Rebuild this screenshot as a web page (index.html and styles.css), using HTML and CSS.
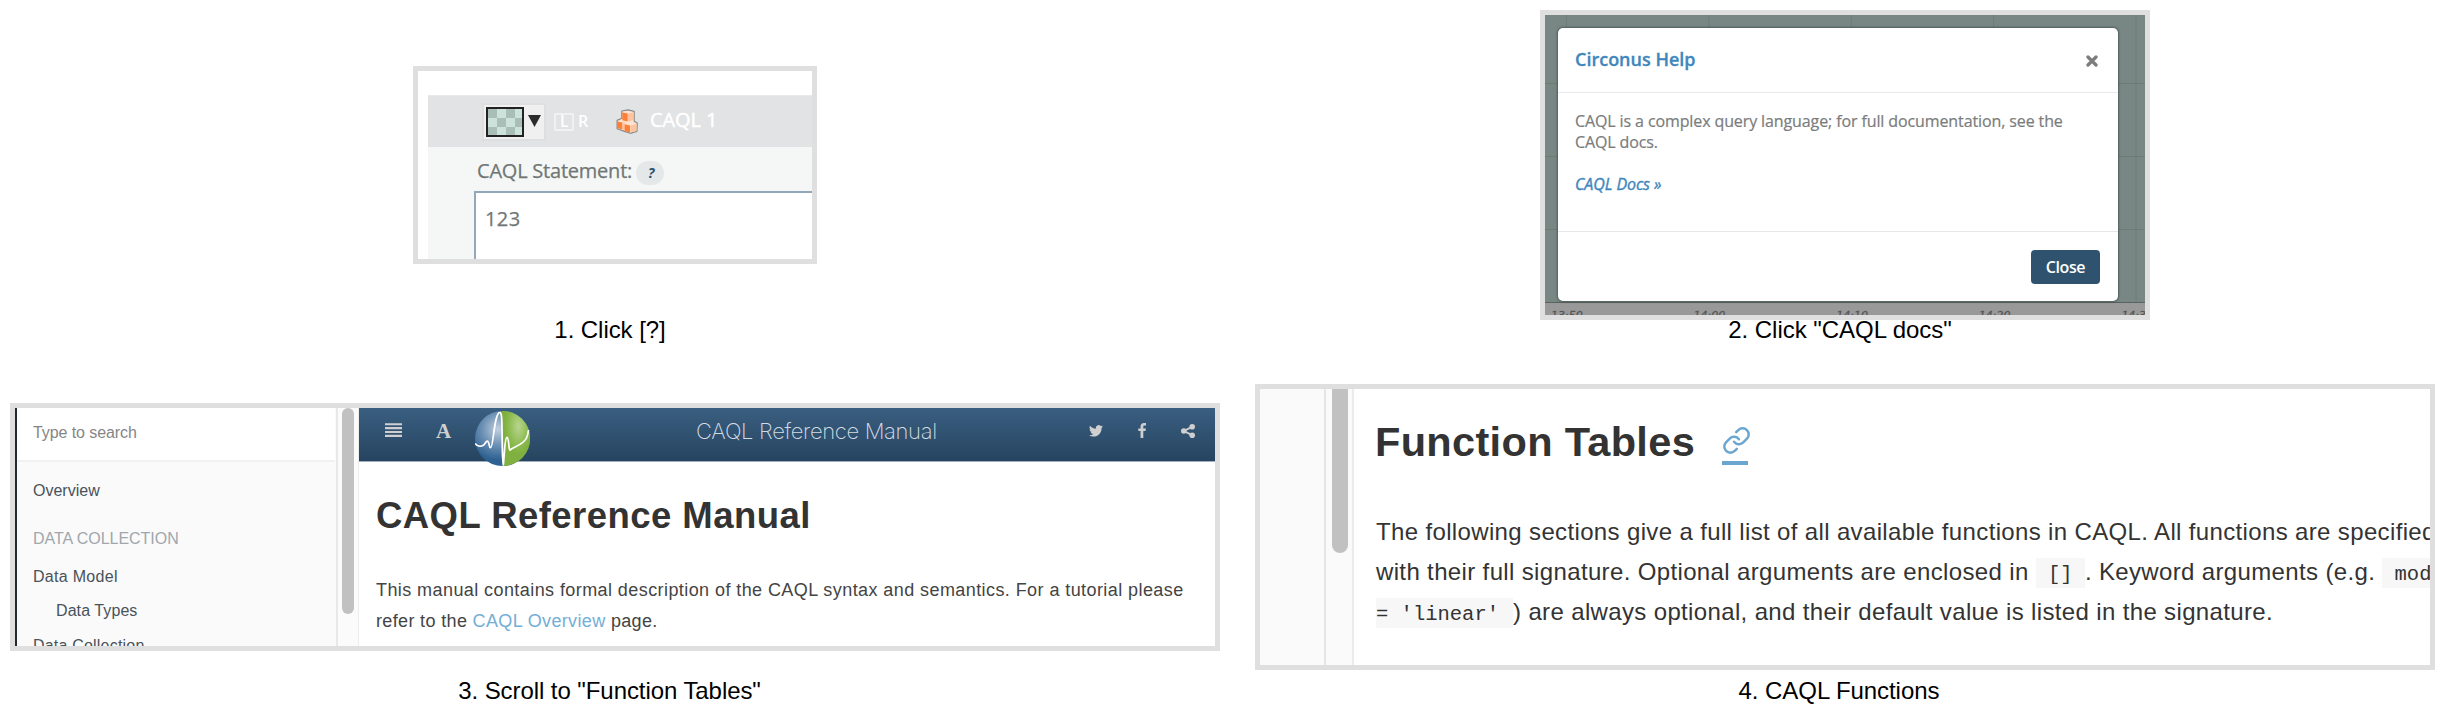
FILE: index.html
```html
<!DOCTYPE html>
<html lang="en">
<head>
<meta charset="utf-8">
<title>CAQL Functions</title>
<link rel="stylesheet" href="styles.css">
</head>
<body>
<main class="steps">
  <figure class="step step-1">
    <div class="frame statement">
      <div class="bar">
        <div class="picker"><span class="swatch"></span><svg class="caret" width="13" height="12" viewBox="0 0 13 12"><path d="M0 0h13L6.5 12z" fill="#2c2c2c"/></svg></div>
        <span class="axis-l">L</span><span class="axis-r">R</span>
        <svg class="cubes" width="22" height="25" viewBox="0 0 22 25">
          <path d="M5.800 2L12 .8l6.200 1.600v9.800l3.100 1.800-.4 8.400-6.600 1.900-5.900-1.900-7.300-2.600v-8.400l4.700-2.200z" fill="#ffe1cf" stroke="#8b8b8b" stroke-width="1.200" stroke-linejoin="round"/>
          <path d="M6.300 3.600l5.400 1v7.800l-5.400-1.200z" fill="#ff7f38"/><path d="M12.200 4.600l5.400-1.200v7.400l-5.400 1.600z" fill="#ffc39d"/>
          <path d="M1 12.400l5.400 1.200v6.800L1 19.100z" fill="#ff7f38"/><path d="M6.600 13.600l2-.6v8l-2-.6z" fill="#ffc39d"/>
          <path d="M8.600 15.300l5.400 1.200v7l-5.400-1.400z" fill="#ff7f38"/><path d="M14.500 16.500l6-1.600v7l-6 1.700z" fill="#ffc39d"/>
        </svg>
        <span class="bar-title">CAQL 1</span>
      </div>
      <div class="statement-body">
        <div class="field-label"><span>CAQL Statement:</span><span class="help">?</span></div>
        <div class="textarea">123</div>
      </div>
    </div>
    <figcaption>1. Click [?]</figcaption>
  </figure>

  <figure class="step step-2">
    <div class="frame chart">
      <div class="modal">
        <div class="modal-head"><span class="modal-title">Circonus Help</span>
          <svg width="12" height="12" viewBox="0 0 12 12"><path d="M2 2l8 8M10 2l-8 8" stroke="#7d7d7d" stroke-width="3.300" stroke-linecap="round"/></svg>
        </div>
        <div class="modal-body">
          <p>CAQL is a complex query language; for full documentation, see the<br>CAQL docs.</p>
          <a class="docs">CAQL Docs »</a>
        </div>
        <div class="modal-foot"><span class="close">Close</span></div>
      </div>
      <div class="time-axis"><span>13:50</span><span>14:00</span><span>14:10</span><span>14:20</span><span>14:30</span></div>
    </div>
    <figcaption>2. Click "CAQL docs"</figcaption>
  </figure>

  <figure class="step step-3">
    <div class="frame manual">
      <nav class="side">
        <div class="search">Type to search</div>
        <ul class="toc">
          <li>Overview</li>
          <li class="toc-head">DATA COLLECTION</li>
          <li class="toc-model">Data Model</li>
          <li class="toc-types">Data Types</li>
          <li class="toc-coll">Data Collection</li>
        </ul>
      </nav>
      <div class="gutter"><div class="thumb"></div></div>
      <div class="page">
        <div class="topbar">
          <svg class="ic-list" width="17" height="14" viewBox="0 0 17 14"><path d="M0 1.200h17M0 5.100h17M0 9h17M0 12.900h17" stroke="#cfcfcf" stroke-width="2.100"/></svg>
          <span class="ic-font">A</span>
          <svg class="logo" width="55" height="55" viewBox="0 0 55 55">
            <defs>
              <radialGradient id="lb" cx=".42" cy=".33" r=".56"><stop offset="0" stop-color="#c3d0de"/><stop offset=".5" stop-color="#6f93b6"/><stop offset="1" stop-color="#2d6192"/></radialGradient>
              <radialGradient id="lg" cx=".58" cy=".28" r=".5"><stop offset="0" stop-color="#b9d58f"/><stop offset=".75" stop-color="#88b94a"/><stop offset="1" stop-color="#80b03f"/></radialGradient>
            </defs>
            <circle cx="27.500" cy="27.500" r="27.500" fill="url(#lb)"/>
            <path d="M27 0a27.500 27.500 0 0 1 1.500 55C27 40 27 14 27 0z" fill="url(#lg)"/>
            <path d="M0 32.500c2 2.600 5.500 3.200 8 2s2.800-5.400 5-4c1.400 1.600 1 6 2.500 6.200C18.500 37 19 1.500 25 1.300 28.500 1 26 40 28.300 54 29.500 45 29.500 27 32 26.300c2 .6 1.500 10.500 2.800 12.900C39 36 49 33 51.500 27c1-2.500 1.800-5 2-8" fill="none" stroke="#fff" stroke-width="1.700" stroke-linejoin="round"/>
          </svg>
          <span class="topbar-title">CAQL Reference Manual</span>
          <svg class="ic-tw" width="14" height="12" viewBox="0 2 24 20.500"><path fill="#cfcfcf" d="M23.953 4.570a10 10 0 01-2.825.775 4.958 4.958 0 002.163-2.723c-.951.555-2.005.959-3.127 1.184a4.920 4.920 0 00-8.384 4.482C7.690 8.095 4.067 6.130 1.640 3.162a4.822 4.822 0 00-.666 2.475c0 1.710.870 3.213 2.188 4.096a4.904 4.904 0 01-2.228-.616v.060a4.923 4.923 0 003.946 4.827 4.996 4.996 0 01-2.212.085 4.936 4.936 0 004.604 3.417 9.867 9.867 0 01-6.102 2.105c-.390 0-.779-.023-1.170-.067a13.995 13.995 0 007.557 2.209c9.053 0 13.998-7.496 13.998-13.985 0-.210 0-.420-.015-.630A9.935 9.935 0 0024 4.590z"/></svg>
          <svg class="ic-fb" width="8" height="15" viewBox="0 0 8 15"><path fill="#cfcfcf" d="M8 .1v2.400H6.600c-1.100 0-1.300.5-1.300 1.300v1.700h2.600l-.35 2.600H5.300V15H2.550V8.100H.3V5.500h2.250V3.600C2.550 1.300 3.900.1 5.900.1z"/></svg>
          <svg class="ic-share" width="14" height="14" viewBox="0 0 14 14"><g fill="#cfcfcf"><circle cx="2.800" cy="7" r="2.800"/><circle cx="11.200" cy="2.800" r="2.800"/><circle cx="11.200" cy="11.200" r="2.800"/></g><path d="M11.200 2.800L2.800 7l8.400 4.200" fill="none" stroke="#cfcfcf" stroke-width="1.900"/></svg>
        </div>
        <h1>CAQL Reference Manual</h1>
        <p>This manual contains formal description of the CAQL syntax and semantics. For a tutorial please<br><span class="line-2">refer to the <a>CAQL Overview</a> page.</span></p>
      </div>
    </div>
    <figcaption>3. Scroll to "Function Tables"</figcaption>
  </figure>

  <figure class="step step-4">
    <div class="frame functions">
      <div class="fn-side"></div>
      <div class="fn-gutter"><div class="fn-thumb"></div></div>
      <div class="fn-page">
        <h2><span>Function Tables</span>
          <a class="anchor"><svg width="27" height="27" viewBox="1 1 22 22" fill="none" stroke="#6aa6d0" stroke-width="2" stroke-linecap="round"><path d="M10 13a5 5 0 0 0 7.540.540l3-3a5 5 0 0 0-7.070-7.070l-1.720 1.710" transform="translate(24 24) rotate(180)"/><path d="M10 13a5 5 0 0 0 7.540.540l3-3a5 5 0 0 0-7.070-7.070l-1.720 1.710"/></svg></a>
        </h2>
        <p>The following sections give a full list of all available functions in CAQL. All functions are specified<br>with their full signature. Optional arguments are enclosed in <code>[]</code>. Keyword arguments (e.g. <code>mode</code><br><code class="cont">= 'linear'</code>) are always optional, and their default value is listed in the signature.</p>
      </div>
    </div>
    <figcaption>4. CAQL Functions</figcaption>
  </figure>
</main>
</body>
</html>
```
FILE: styles.css
```css
* { box-sizing: border-box; }
body { margin: 0; background: #fff; font-family: "Liberation Sans", Arial, sans-serif; color: #000; }
svg { display: block; flex: none; }
h1, h2, p, ul { margin: 0; padding: 0; list-style: none; }

.steps { display: grid; grid-template-columns: 1230px 1230px; grid-template-rows: 345px 379px; height: 724px; overflow: hidden; }
.step { margin: 0; display: flex; flex-direction: column; align-items: center; }
.frame { flex: none; border: 5px solid #dfdfdf; overflow: hidden; white-space: nowrap; background: #fff; }
figcaption { font-size: 24px; line-height: 28px; letter-spacing: -0.06px; padding-right: 10px; z-index: 1; }

/* step 1: statement editor */
.step-1 .frame { width: 404px; height: 198px; margin-top: 66px; }
.step-1 figcaption { margin-top: 52px; }
.statement { padding: 24px 0 0 10px; font-family: "Open Sans", sans-serif; }
.bar { display: flex; align-items: flex-start; height: 52px; background: #e2e3e5; border-top: 1px solid #e9e9ea; padding: 7px 0 0 54px; color: #fff; }
.picker { flex: none; display: flex; width: 64px; height: 38px; padding: 2px; background: #f0f0f0; border: 2px solid #dfdfdf; }
.swatch { flex: none; width: 38px; height: 30px; border: 2px solid #222; background: conic-gradient(#cbe3db 25%, #a9beb6 0 50%, #cbe3db 0 75%, #a9beb6 0) 0 0 / 18px 18px; }
.caret { margin: 8px 0 0 4px; }
.axis-l { width: 20px; height: 18px; margin: 10px 0 0 8px; border: 2px solid #f0f1f2; font-size: 15.500px; font-weight: 600; line-height: 12px; padding-left: 4px; }
.axis-r { margin: 10px 0 0 4px; width: 15px; font-size: 16px; font-weight: 600; line-height: 16px; }
.cubes { margin: 6px 0 0 23px; }
.bar-title { margin: 4px 0 0 12px; font-size: 20px; line-height: 26px; letter-spacing: -0.09px; -webkit-text-stroke: 0.5px #fff; }
.statement-body { height: 112px; padding: 10px 0 0 46px; background: #f4f7f6; color: #707675; -webkit-text-stroke: 0.25px #707675; }
.field-label { display: flex; padding-left: 3px; height: 34px; font-size: 20px; line-height: 28px; letter-spacing: -0.22px; }
.help { width: 28px; height: 24px; margin: 4px 0 0 4px; border-radius: 12px; background: #e5e8e8; color: #2f526e; font-size: 14px; font-weight: 700; font-style: italic; line-height: 24px; padding-left: 2px; text-align: center; -webkit-text-stroke: 0; }
.textarea { height: 90px; border: 2px solid #92a8b8; border-right: 0; background: #fff; font-size: 20px; line-height: 28px; letter-spacing: 0.4px; padding: 12px 0 0 9px; }

/* step 2: help dialog over the chart */
.step-2 .frame { width: 610px; height: 310px; margin-top: 10px; }
.step-2 figcaption { margin-top: -4px; padding-right: 10px; letter-spacing: -0.03px; }
.chart { padding: 13px 0 0 13px; font-family: "Open Sans", sans-serif; background-color: #788783;
  background-image: linear-gradient(#6e7c78, #6e7c78), linear-gradient(#6e7c78, #6e7c78), linear-gradient(#6e7c78, #6e7c78), linear-gradient(90deg, #6e7c78 1px, transparent 1px);
  background-size: 100% 1px, 100% 1px, 100% 1px, 142.400px 100%; background-position: 0 68px, 0 141px, 0 214px, 21px 0; background-repeat: no-repeat, no-repeat, no-repeat, repeat-x; }
.modal { position: relative; width: 560px; height: 273px; border-radius: 5px; background: #fff; box-shadow: 0 0 2px 1px rgba(50, 62, 58, 0.55); }
.modal-head { display: flex; justify-content: space-between; height: 65px; padding: 19px 20px 0 17px; border-bottom: 1.500px solid #e6eaed; }
.modal-title { font-size: 18px; font-weight: 600; line-height: 24px; color: #3e87bd; -webkit-text-stroke: 0.3px #3e87bd; }
.modal-head svg { margin-top: 8px; }
.modal-body { height: 139px; padding: 18px 0 0 17px; border-bottom: 1px solid #e4e8eb; font-size: 16px; line-height: 21px; letter-spacing: -0.11px; color: #7a7c7c; -webkit-text-stroke: 0.2px #7a7c7c; }
.docs { display: block; margin-top: 21px; font-style: italic; letter-spacing: -0.07px; color: #3e87bd; -webkit-text-stroke: 0.4px #3e87bd; }
.modal-foot { display: flex; justify-content: flex-end; padding: 18px 18px 0 0; }
.close { width: 69px; height: 34px; border-radius: 4px; background: #2f536f; color: #fff; font-size: 16px; font-weight: 600; line-height: 34px; letter-spacing: -0.41px; text-align: center; }
.time-axis { display: flex; height: 13px; margin: 1px 0 0 -13px; padding: 7px 0 0 6px; background: #999; border-top: 1px solid #59625f; font: italic 11px/12px "DejaVu Sans", sans-serif; color: #555; }
.time-axis span { flex: none; width: 142.600px; -webkit-text-stroke: 0.300px #555; }

/* step 3: reference manual */
.step-3 .frame { width: 1210px; height: 248px; margin-top: 58px; }
.step-3 figcaption { margin-top: 26px; padding-right: 11px; letter-spacing: -0.07px; }
.manual { display: flex; }
.side { flex: none; width: 323px; border-left: 2px solid #23292d; border-right: 2px solid #e8e8e8; background: #fafafa; font-size: 16px; line-height: 20px; color: #48525a; }
.search { height: 54px; width: 318px; padding: 15px 0 0 16px; background: #fff; border-bottom: 2px solid #f1f1f1; color: #868686; letter-spacing: -0.08px; }
.toc { padding: 19px 0 0 16px; }
.toc-head { margin-top: 28px; color: #9fa7ad; letter-spacing: -0.03px; }
.toc-model { margin-top: 18px; letter-spacing: 0.3px; }
.toc-types { margin-top: 14px; padding-left: 23px; letter-spacing: 0.08px; }
.toc-coll { margin-top: 15px; letter-spacing: 0.2px; }
.gutter { flex: none; width: 21px; padding-left: 4px; background: #fbfbfb; border-right: 1px solid #ededed; }
.thumb { width: 12px; height: 206px; border-radius: 6px; background: #c1c1c1; }
.page { flex: 1; }
.topbar { display: flex; align-items: flex-start; height: 54px; padding-left: 26px; background: linear-gradient(#3a5f81, #26445f); border-bottom: 1px solid #9fb0bf; }
.ic-list { margin-top: 15px; }
.ic-font { margin: 11px 0 0 34px; width: 16px; font: bold 21px/24px "Liberation Serif", serif; color: #cfcfcf; }
.logo { margin: 3px -55px 0 23px; position: relative; }
.topbar-title { margin: 10px 0 0 221px; font: 200 22px/26px Inter, sans-serif; letter-spacing: -0.34px; color: #d3dce4; }
.ic-tw { margin: 17px 0 0 auto; }
.ic-fb { margin: 15px 0 0 35px; }
.ic-share { margin: 16px 20px 0 35px; }
.page h1 { margin: 33px 0 38px 17px; font-size: 36.500px; line-height: 42px; letter-spacing: 0.45px; color: #333; }
.page p { margin-left: 17px; font-size: 18px; line-height: 30.700px; letter-spacing: 0.42px; color: #444; }
.line-2 { letter-spacing: 0.35px; }
.page a { color: #73aed6; }

/* step 4: function tables */
.step-4 .frame { width: 1180px; height: 286px; margin-top: 39px; }
.step-4 figcaption { margin-top: 7px; padding-right: 12px; }
.functions { display: flex; }
.fn-side { flex: none; width: 66px; background: #fafafa; border-right: 2px solid #e5e5e5; }
.fn-gutter { flex: none; width: 28px; padding-left: 6px; background: #fafafa; border-right: 2px solid #ebebeb; }
.fn-thumb { width: 16px; height: 164px; border-radius: 0 0 8px 8px; background: #c1c1c1; }
.fn-page { flex: 1; min-width: 0; color: #333; }
.fn-page h2 { display: flex; height: 48px; margin: 29px 0 46px 21px; font-size: 41.500px; line-height: 48px; letter-spacing: 0.33px; }
.anchor { width: 26px; height: 37px; margin: 10px 0 0 27px; border-bottom: 4px solid #6aa6d0; }
.anchor svg { margin: -1px 0 0 1px; }
.fn-page p { margin-left: 22px; font-size: 24px; line-height: 40px; letter-spacing: 0.355px; }
code { padding: 5px 12.300px 2px; background: #f7f7f7; font: 20.500px/1 "Liberation Mono", monospace; letter-spacing: 0; }
code.cont { padding: 5px 14px 2px 0; }
```
